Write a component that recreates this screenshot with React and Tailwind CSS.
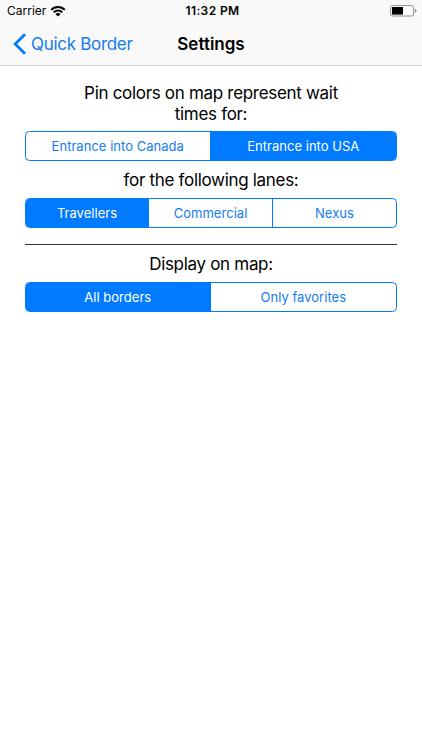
function Segmented({ options, selected, className }) {
  return (
    <div className={`flex h-[30px] overflow-hidden rounded-[4.5px] border border-[#007aff] bg-white ${className}`}>
      {options.map((label, i) => (
        <button
          key={label}
          className={`whitespace-nowrap text-center text-[13px] leading-[28px] tracking-[0.03px] ${
            i < options.length - 1 ? "border-r border-[#007aff]" : "flex-1"
          } ${options.length === 2 ? "w-[184.5px]" : i === 0 ? "w-[123px]" : "w-[124px]"} ${
            i === selected ? "bg-[#007aff] text-white" : "text-[#167cf0]"
          }`}
        >
          {label}
        </button>
      ))}
    </div>
  );
}

function Wifi() {
  return (
    <svg width="16" height="12" viewBox="0 0 16 12" fill="none" stroke="#000" strokeWidth="2">
      <path d="M1.2 4.9C4.9 1.1 11.1 1.1 14.8 4.9" />
      <path d="M3.7 7.4C6.1 5 9.9 5 12.3 7.4" />
      <path d="M5.4 9.1C6.8 7.7 9.2 7.7 10.6 9.1L8 11.6Z" fill="#000" stroke="none" />
    </svg>
  );
}

function Battery() {
  return (
    <svg width="27" height="12" viewBox="0 0 27 12">
      <rect x="0.6" y="0.6" width="23" height="10.4" rx="2" fill="#fff" stroke="#8e8e8e" strokeWidth="1" />
      <rect x="2" y="2" width="11" height="7.6" fill="#000" />
      <path d="M24.8 4C27 4.4 27 7.2 24.8 7.6Z" fill="#8e8e8e" />
    </svg>
  );
}

export default function App() {
  return (
    <div className="h-[750px] w-[422px] overflow-hidden bg-white font-['Inter','Liberation_Sans',sans-serif] text-black">
      <header className="h-[66px] border-b border-[#d2d2d2] bg-[#f9f9f9]">
        <div className="grid h-[22px] grid-cols-[1fr_auto_1fr] items-center pl-[7px] pr-[5px]">
          <div className="flex items-center gap-[4px]">
            <span className="text-[12px] leading-[22px]">Carrier</span>
            <Wifi />
          </div>
          <span className="pl-px text-center text-[12px] font-semibold leading-[22px] tracking-[0.4px]">11:32 PM</span>
          <div className="flex justify-end">
            <Battery />
          </div>
        </div>
        <div className="grid h-[43px] grid-cols-[1fr_auto_1fr] items-center">
          <button className="flex items-center gap-[5px] pl-[13px] text-[#167cf0]">
            <svg width="13" height="22" viewBox="0 0 13 22" fill="none" stroke="#007aff" strokeWidth="2.8">
              <path d="M12 1.2L2.2 11L12 20.8" />
            </svg>
            <span className="text-[17px] leading-[22px] tracking-[-0.3px]">Quick Border</span>
          </button>
          <h1 className="text-[17px] font-semibold leading-[22px]">Settings</h1>
          <span />
        </div>
      </header>
      <main className="px-[25px] pt-[17px] text-center text-[17px] tracking-[-0.31px]">
        <p className="leading-[20.5px]">
          Pin colors on map represent wait
          <br />
          times for:
        </p>
        <Segmented className="mt-[7px]" selected={1} options={["Entrance into Canada", "Entrance into USA"]} />
        <p className="mt-[9px] leading-[21px]">for the following lanes:</p>
        <Segmented className="mt-[7px]" selected={0} options={["Travellers", "Commercial", "Nexus"]} />
        <hr className="mt-[16px] h-px border-0 bg-[#333]" />
        <p className="mt-[9px] leading-[21px]">Display on map:</p>
        <Segmented className="mt-[7px]" selected={0} options={["All borders", "Only favorites"]} />
      </main>
    </div>
  );
}
